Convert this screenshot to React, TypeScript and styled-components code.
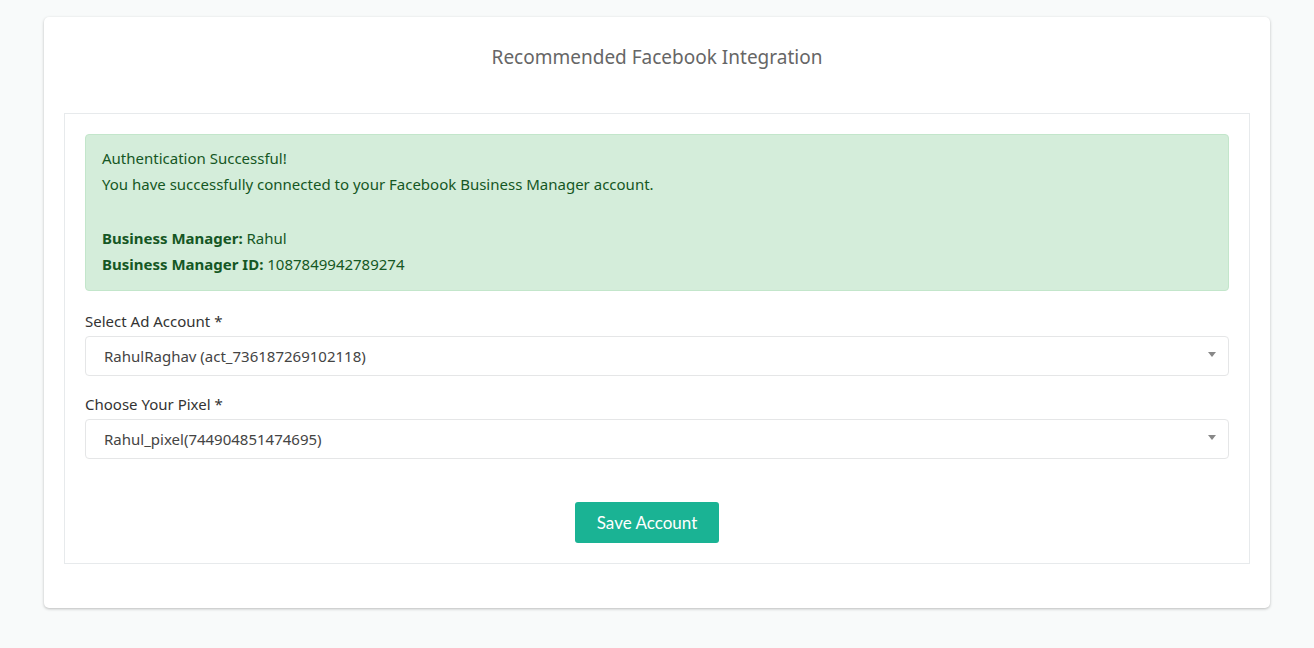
import React from "react";
import styled, { createGlobalStyle } from "styled-components";

const Global = createGlobalStyle`
  body {
    margin: 0;
    background: #f8fafa;
    font-family: "Noto Sans", "Open Sans", sans-serif;
  }
`

const Page = styled.div`
  padding: 17px 44px 39px;
`

const Card = styled.div`
  background: #fff;
  border-radius: 5px;
  box-shadow: 0 1px 3px rgba(0, 0, 0, 0.25);
  padding: 26px 20px 44px;
`

const Title = styled.h3`
  margin: 0 0 42px;
  text-align: center;
  font-weight: 400;
  font-size: 19px;
  color: #666;
  line-height: 28px;
`

const Panel = styled.div`
  border: 1px solid #e7eaec;
  padding: 20px 20px 20px;
`

const Alert = styled.div`
  background: #d4edda;
  border: 1px solid #c3e6cb;
  border-radius: 4px;
  color: #155724;
  font-size: 15px;
  line-height: 26px;
  padding: 10px 16px 13px;
  margin-bottom: 20px;
`

const Gap = styled.div`
  height: 28px;
`

const Field = styled.div`
  margin-bottom: 18px;
`

const Label = styled.div`
  font-size: 15px;
  color: #333;
  line-height: 20px;
  margin-bottom: 5px;
`

const Select = styled.div`
  height: 38px;
  border: 1px solid #e5e6e7;
  border-radius: 4px;
  display: flex;
  align-items: center;
  justify-content: space-between;
  padding: 0 12px 0 18px;
  font-size: 15px;
  color: #444;
`

const Caret = styled.span`
  width: 0;
  height: 0;
  border-left: 4px solid transparent;
  border-right: 4px solid transparent;
  border-top: 5px solid #888;
  margin-top: -4px;
`

const Actions = styled.div`
  display: flex;
  justify-content: center;
  padding: 25px 20px 0 0;
`

const Button = styled.button`
  background: #1ab394;
  color: #fff;
  border: none;
  border-radius: 3px;
  width: 144px;
  height: 41px;
  font-family: Lato, sans-serif;
  font-size: 17px;
`

const App: React.FC = () => (
  <Page>
    <Global />
    <Card>
      <Title>Recommended Facebook Integration</Title>
      <Panel>
        <Alert>
          <div>Authentication Successful!</div>
          <div>You have successfully connected to your Facebook Business Manager account.</div>
          <Gap />
          <div><b>Business Manager:</b> Rahul</div>
          <div><b>Business Manager ID:</b> 1087849942789274</div>
        </Alert>
        <Field>
          <Label>Select Ad Account *</Label>
          <Select>RahulRaghav (act_736187269102118)<Caret /></Select>
        </Field>
        <Field>
          <Label>Choose Your Pixel *</Label>
          <Select>Rahul_pixel(744904851474695)<Caret /></Select>
        </Field>
        <Actions>
          <Button>Save Account</Button>
        </Actions>
      </Panel>
    </Card>
  </Page>
)

export default App;
